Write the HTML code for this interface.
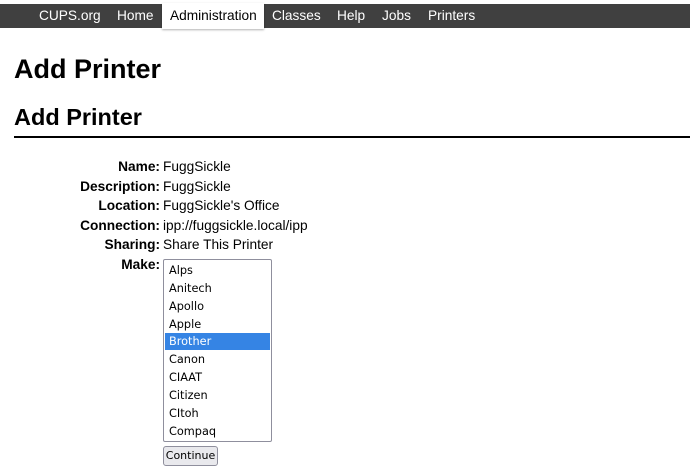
<!DOCTYPE html>
<html><head><style>
body{margin:0;background:#fff;font-family:"Liberation Sans",sans-serif;color:#000;width:690px;height:469px;overflow:hidden;position:relative}
.nav{position:absolute;top:4px;left:0;width:690px;height:24px;background:#404040}
.nav span{position:absolute;top:0;height:24px;line-height:23px;color:#fff;font-size:13.7px}
.nav .act{background:#fff;color:#000;top:-1px;height:26px;line-height:25px;padding:0 8px;width:86px;box-shadow:0 1px 2px rgba(0,0,0,.3)}
h1{position:absolute;left:14px;top:54px;margin:0;font-size:27px;font-weight:bold}
h2{position:absolute;left:14px;top:104px;margin:0;font-size:23.5px;font-weight:bold}
.rule{position:absolute;left:14px;top:136px;width:676px;height:2px;background:#000}
.lab{position:absolute;right:530px;font-weight:bold;font-size:13.7px}
.val{position:absolute;left:163px;font-size:13.7px}
.sel{position:absolute;left:163px;top:259px;width:107px;height:181px;border:1px solid #8f8f9d;border-radius:2px;font-family:"DejaVu Sans",sans-serif;font-size:11.3px}
.sel div{position:absolute;left:1px;width:105px;height:17px;line-height:17px;padding-left:4px;box-sizing:border-box}
.sel .hl{background:#3584e4;color:#fff}
.btn{position:absolute;left:163px;top:446px;width:53px;height:18px;border:1px solid #8f8f9d;border-radius:3px;background:#e9e9ed;font-family:"DejaVu Sans",sans-serif;font-size:11px;line-height:18px;text-align:center}
</style></head><body>
<div class="nav">
<span style="left:39px">CUPS.org</span>
<span style="left:117px">Home</span>
<span class="act" style="left:162px">Administration</span>
<span style="left:272px">Classes</span>
<span style="left:337px">Help</span>
<span style="left:382px">Jobs</span>
<span style="left:428px">Printers</span>
</div>
<h1>Add Printer</h1>
<h2>Add Printer</h2>
<div class="rule"></div>
<div class="lab" style="top:159px">Name:</div><div class="val" style="top:159px">FuggSickle</div>
<div class="lab" style="top:179px">Description:</div><div class="val" style="top:179px">FuggSickle</div>
<div class="lab" style="top:198px">Location:</div><div class="val" style="top:198px">FuggSickle's Office</div>
<div class="lab" style="top:218px">Connection:</div><div class="val" style="top:218px">ipp://fuggsickle.local/ipp</div>
<div class="lab" style="top:237px">Sharing:</div><div class="val" style="top:237px">Share This Printer</div>
<div class="lab" style="top:257px">Make:</div>
<div class="sel">
<div style="top:2px">Alps</div>
<div style="top:20px">Anitech</div>
<div style="top:38px">Apollo</div>
<div style="top:56px">Apple</div>
<div class="hl" style="top:73px">Brother</div>
<div style="top:91px">Canon</div>
<div style="top:109px">CIAAT</div>
<div style="top:127px">Citizen</div>
<div style="top:145px">CItoh</div>
<div style="top:163px">Compaq</div>
</div>
<div class="btn">Continue</div>
</body></html>
